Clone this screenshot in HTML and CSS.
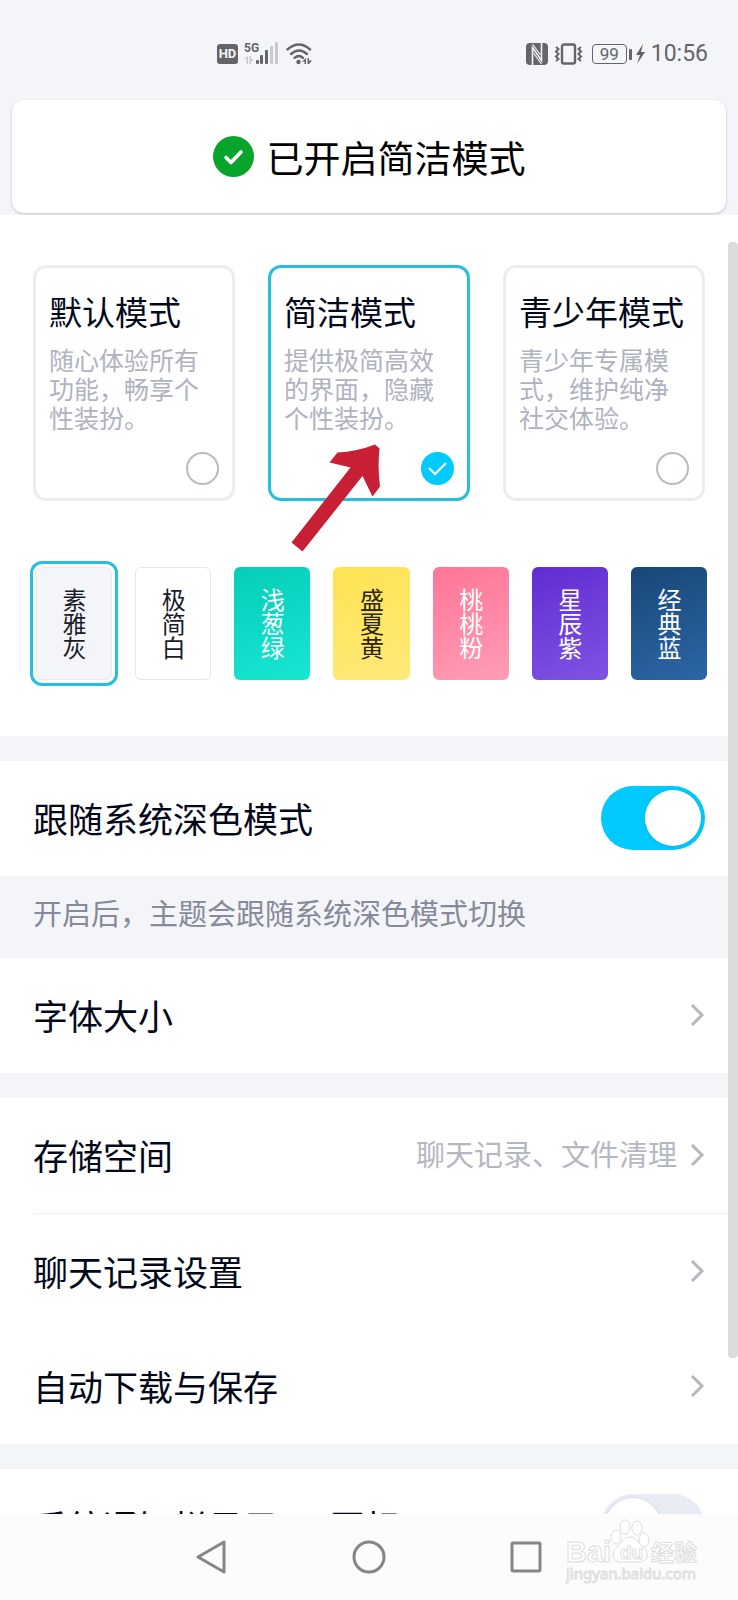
FILE: index.html
```html
<!DOCTYPE html>
<html lang="zh-CN">
<head>
<meta charset="utf-8">
<meta name="viewport" content="width=device-width, initial-scale=1">
<title>简洁模式</title>
<link rel="stylesheet" href="styles.css">
</head>
<body>
<div class="app">
  <header class="top">
    <div class="status">
      <div class="status-left">
        <span class="hd">HD</span>
        <svg class="signal" width="36" height="24" viewBox="0 0 36 24" aria-hidden="true">
          <text x="0" y="10" class="net">5G</text>
          <g fill="#c9cacd">
            <path d="M0 17l4-3v8H2.500v-5zM5.500 14H7v3l3 0-3 3v2H5.500z"/>
            <rect x="26" y="4" width="3" height="18" rx="1"/>
            <rect x="31" y="0" width="3" height="22" rx="1"/>
          </g>
          <g fill="#646568">
            <rect x="12" y="18" width="3" height="4" rx="1"/>
            <rect x="16" y="13" width="3" height="9" rx="1"/>
            <rect x="21" y="8" width="3" height="14" rx="1"/>
          </g>
        </svg>
        <svg width="27" height="22" viewBox="0 0 27 22" aria-hidden="true">
          <g fill="none" stroke="#646568" stroke-width="2.400" stroke-linecap="round">
            <path d="M1.500 6.500Q13 -3.500 24 6.500"/>
            <path d="M5 11Q13 4 21 11"/>
            <path d="M8.500 14.800Q13 11 17 14.800"/>
          </g>
          <circle cx="12.500" cy="19" r="2.200" fill="#646568"/>
          <path d="M16 18.500l4-3.500v6h-1.500v-2.500zM21.500 15H23v2.500h3L23 21h-1.500z" fill="#646568"/>
        </svg>
      </div>
      <div class="status-right">
        <svg width="22" height="22" viewBox="0 0 22 22" aria-hidden="true">
          <rect width="22" height="22" rx="4" fill="#646568"/>
          <path d="M6.500 22V4.500l9 13V0" fill="none" stroke="#f4f5f9" stroke-width="1.600"/>
          <path d="M6.500 1l8 11M7.500 10l8 11" fill="none" stroke="#f4f5f9" stroke-width="1.200"/>
        </svg>
        <svg class="vibrate" width="29" height="22" viewBox="0 0 29 22" fill="none" stroke="#646568" aria-hidden="true">
          <rect x="8" y="1.500" width="13" height="19" rx="2" stroke-width="2.400"/>
          <path d="M2 4l2.500 2L2 8.500 4.500 11 2 13.500 4.500 16 2 18M27 4l-2.500 2L27 8.500 24.500 11l2.500 2.500L24.500 16l2.500 2" stroke-width="2"/>
        </svg>
        <span class="battery">99</span>
        <svg width="9" height="20" viewBox="0 0 9 20" aria-hidden="true"><path d="M7 0L0 11h4L1 20l8-12H5z" fill="#646568"/></svg>
        <time class="clock">10:56</time>
      </div>
    </div>
    <div class="toast" role="status">
      <svg width="41" height="41" viewBox="0 0 41 41" aria-hidden="true">
        <circle cx="20.500" cy="20.500" r="20.500" fill="#08a42c"/>
        <path d="M13 21.500l5 5L28 16" fill="none" stroke="#fff" stroke-width="3.600" stroke-linecap="round" stroke-linejoin="round"/>
      </svg>
      <span>已开启简洁模式</span>
    </div>
  </header>

  <main class="content">
    <section class="panel theme">
      <div class="modes">
        <label class="mode">
          <span class="mode-title">默认模式</span>
          <span class="mode-desc">随心体验所有功能，畅享个性装扮。</span>
          <span class="pick"><input type="radio" name="mode"></span>
        </label>
        <label class="mode mode-on">
          <span class="mode-title">简洁模式</span>
          <span class="mode-desc">提供极简高效的界面，隐藏个性装扮。</span>
          <span class="pick"><input type="radio" name="mode" checked>
            <svg width="33" height="33" viewBox="0 0 33 33" aria-hidden="true"><path d="M8 16l6 6 11-11" fill="none" stroke="#e8fbff" stroke-width="2.400"/></svg>
          </span>
          <svg class="pointer" width="90" height="109" viewBox="0 0 90 109" aria-hidden="true"><path d="M84 0.500L88.500 4.500Q86.500 24 89 42.500L81.500 52.500 71.500 32 11.500 107.500 0.500 98.500 59.500 23.500 38.500 18.500 46.500 8.500Q66 7.500 84 0.500z" fill="#c81f35"/></svg>
        </label>
        <label class="mode">
          <span class="mode-title">青少年模式</span>
          <span class="mode-desc">青少年专属模式，维护纯净社交体验。</span>
          <span class="pick"><input type="radio" name="mode"></span>
        </label>
      </div>
      <div class="swatches">
        <label class="swatch gray"><input type="radio" name="skin" checked>素雅灰</label>
        <label class="swatch white"><input type="radio" name="skin">极简白</label>
        <label class="swatch green"><input type="radio" name="skin">浅葱绿</label>
        <label class="swatch yellow"><input type="radio" name="skin">盛夏黄</label>
        <label class="swatch pink"><input type="radio" name="skin">桃桃粉</label>
        <label class="swatch purple"><input type="radio" name="skin">星辰紫</label>
        <label class="swatch blue"><input type="radio" name="skin">经典蓝</label>
      </div>
    </section>

    <section class="panel">
      <label class="row"><span>跟随系统深色模式</span><input class="switch" type="checkbox" role="switch" checked></label>
    </section>
    <p class="note">开启后，主题会跟随系统深色模式切换</p>
    <section class="panel">
      <a class="row" href="#font"><span>字体大小</span>
        <svg class="chevron" width="16" height="24" viewBox="0 0 16 24" aria-hidden="true"><path d="M3 2l10 10L3 22"/></svg></a>
    </section>
    <section class="panel">
      <a class="row" href="#storage"><span>存储空间</span><span class="value">聊天记录、文件清理</span>
        <svg class="chevron" width="16" height="24" viewBox="0 0 16 24" aria-hidden="true"><path d="M3 2l10 10L3 22"/></svg></a>
      <hr class="line">
      <a class="row" href="#history"><span>聊天记录设置</span>
        <svg class="chevron" width="16" height="24" viewBox="0 0 16 24" aria-hidden="true"><path d="M3 2l10 10L3 22"/></svg></a>
      <a class="row" href="#download"><span>自动下载与保存</span>
        <svg class="chevron" width="16" height="24" viewBox="0 0 16 24" aria-hidden="true"><path d="M3 2l10 10L3 22"/></svg></a>
    </section>
    <section class="panel">
      <label class="row"><span>系统通知栏显示QQ图标</span><input class="switch" type="checkbox" role="switch"></label>
    </section>
    <div class="scrollbar"></div>
  </main>

  <nav class="nav">
    <button type="button" aria-label="返回"><svg width="34" height="36" viewBox="0 0 34 36"><path d="M29 3v30L3 18z"/></svg></button>
    <button type="button" aria-label="主页"><svg width="34" height="36" viewBox="0 0 34 36"><circle cx="17" cy="18" r="15"/></svg></button>
    <button type="button" aria-label="最近任务"><svg width="34" height="36" viewBox="0 0 34 36"><rect x="3" y="4" width="28" height="28" rx="1"/></svg></button>
    <svg class="mark" width="136" height="66" viewBox="0 0 136 66" role="img" aria-label="Baidu 经验">
      <g fill="#fff" stroke="#dedede" stroke-width="1">
        <text x="1" y="43" class="mark-big">Bai</text>
        <ellipse cx="51" cy="18" rx="5" ry="7"/>
        <ellipse cx="60" cy="8" rx="5" ry="7"/>
        <ellipse cx="72" cy="9" rx="5" ry="7"/>
        <ellipse cx="79" cy="21" rx="5" ry="7"/>
        <path d="M65 18c7 0 9 7 14 11 6 5 3 14-4 14H55c-7 0-9-9-4-14 5-4 7-11 14-11z"/>
        <text x="55" y="40" class="mark-du">du</text>
        <text x="86" y="42" class="mark-cn">经验</text>
        <text x="1" y="60" class="mark-url">jingyan.baidu.com</text>
      </g>
    </svg>
  </nav>
</div>
</body>
</html>
```
FILE: styles.css
```css
* { box-sizing: border-box; }

body {
  margin: 0;
  background: #f4f5f9;
  color: #03081a;
  font-family: "Noto Sans CJK SC", "Noto Sans", sans-serif;
}

.app {
  display: flex;
  flex-direction: column;
  height: 100vh;
  overflow: hidden;
}

/* status bar and toast */
.top {
  flex: none;
  padding: 0 12px 2px;
}

.status {
  display: flex;
  justify-content: space-between;
  align-items: center;
  height: 100px;
  padding: 8px 18px 0 205px;
  color: #646568;
  font-family: Roboto, sans-serif;
}

.status-left,
.status-right {
  display: flex;
  align-items: center;
}

.status-left { gap: 6px; }
.status-right { gap: 4px; }

.hd {
  width: 21px;
  border-radius: 3px;
  background: #646568;
  color: #f4f5f9;
  font-size: 13px;
  font-weight: 700;
  line-height: 20px;
  text-align: center;
}

.net {
  fill: #646568;
  font-size: 12px;
  font-weight: 700;
}

.vibrate { margin-left: 2px; }

.battery {
  position: relative;
  width: 35px;
  margin: 0 5px 0 5px;
  border: 1px solid #646568;
  border-radius: 4px;
  font-size: 17px;
  line-height: 18px;
  text-align: center;
}

.battery::after {
  content: "";
  position: absolute;
  top: 4px;
  right: -6px;
  width: 3px;
  height: 11px;
  border-radius: 1px;
  background: #646568;
}

.clock {
  margin-left: 2px;
  font-size: 23px;
  line-height: 28px;
}

.toast {
  display: flex;
  justify-content: center;
  align-items: center;
  gap: 13px;
  height: 113px;
  border-radius: 12px;
  background: #fff;
  box-shadow: 0 1px 3px rgba(0, 0, 0, 0.22);
  color: #000;
  font-size: 37px;
  line-height: 48px;
}

/* settings list */
.content {
  position: relative;
  flex: 1;
  min-height: 0;
  overflow: hidden;
}

.panel { background: #fff; }
.panel + .panel { margin-top: 25px; }

.theme { padding: 50px 0 56px; }

.modes {
  display: grid;
  grid-template-columns: repeat(3, 1fr);
  gap: 33px;
  padding: 0 33px;
}

.mode {
  position: relative;
  display: flex;
  flex-direction: column;
  padding: 23px 13px 13px;
  border: 3px solid #ebedf2;
  border-radius: 13px;
}

.mode-on { border-color: #27bfdf; }

.mode-title {
  font-size: 33px;
  line-height: 40px;
  white-space: nowrap;
}

.mode-desc {
  margin: 14px 0 20px;
  color: #b0b3bf;
  font-size: 25px;
  line-height: 29px;
}

.pick {
  display: grid;
  align-self: flex-end;
}

.pick > * { grid-area: 1 / 1; }

.pick input {
  appearance: none;
  width: 33px;
  height: 33px;
  margin: 0;
  border: 2px solid #b9bbc3;
  border-radius: 50%;
}

.pick input:checked {
  border-color: #00caff;
  background: #00caff;
}

.pick svg { z-index: 1; }

.pointer {
  position: absolute;
  top: 176px;
  left: 20px;
  z-index: 1;
  pointer-events: none;
}

.swatches {
  display: grid;
  grid-template-columns: repeat(7, 1fr);
  gap: 23px;
  margin-top: 66px;
  padding: 0 31px 0 36px;
}

.swatch {
  display: flex;
  justify-content: center;
  align-items: center;
  height: 113px;
  border-radius: 6px;
  color: #fff;
  font-size: 24px;
  line-height: 28px;
  writing-mode: vertical-rl;
}

.swatch input {
  position: absolute;
  appearance: none;
  margin: 0;
}

.swatch:has(:checked) {
  outline: 3px solid #27bfdf;
  outline-offset: 3px;
}

.gray { border: 1px solid #e8e9ee; background: #f4f5f9; color: #1b1c2b; }
.white { border: 1px solid #e6e7ea; background: #fff; color: #1b1c2b; }
.green { background: linear-gradient(160deg, #06cdb9, #17e6d3); }
.yellow { background: linear-gradient(160deg, #ffe353, #ffe97a); color: #2b2608; }
.pink { background: linear-gradient(160deg, #ff7597, #ff9db5); }
.purple { background: linear-gradient(160deg, #602dd2, #8053e4); }
.blue { background: linear-gradient(160deg, #194778, #2c66a6); }

.row {
  display: flex;
  align-items: center;
  height: 115px;
  padding: 0 33px 2px;
  color: inherit;
  font-size: 35px;
  line-height: 48px;
  text-decoration: none;
}

.row > :first-child { flex: 1; }

.value {
  margin-right: 12px;
  padding-bottom: 4px;
  color: #b5b7c1;
  font-size: 29px;
}

.chevron {
  fill: none;
  stroke: #b5b7c1;
  stroke-width: 3;
}

.line {
  height: 1px;
  margin: 0 0 0 33px;
  border: 0;
  background: #eff0f3;
}

.note {
  margin: 0;
  padding: 16px 33px 26px;
  color: #878a9b;
  font-size: 29px;
  line-height: 40px;
}

.switch {
  appearance: none;
  width: 104px;
  height: 64px;
  margin: 0;
  padding: 4px;
  border-radius: 32px;
  background: #e9ebf5;
}

.switch::after {
  content: "";
  display: block;
  width: 56px;
  height: 56px;
  border-radius: 50%;
  background: #fff;
  box-shadow: 0 1px 4px rgba(60, 80, 140, 0.2);
}

.switch:checked { background: #00caff; }
.switch:checked::after { margin-left: auto; }

.scrollbar {
  position: absolute;
  top: 27px;
  right: 0;
  bottom: 156px;
  width: 10px;
  border-radius: 4px;
  background: #dcdcdc;
}

/* system navigation */
.nav {
  position: relative;
  display: flex;
  flex: none;
  justify-content: center;
  align-items: center;
  gap: 123px;
  height: 86px;
  background: #fcfcfc;
}

.nav button {
  display: flex;
  padding: 0;
  border: 0;
  background: none;
}

.nav button svg {
  fill: none;
  stroke: #868686;
  stroke-width: 3;
  stroke-linejoin: round;
}

.mark {
  position: absolute;
  right: 37px;
  bottom: 15px;
  font-family: "Liberation Sans", "Noto Sans CJK SC", sans-serif;
}

.mark-big { font-size: 29px; font-weight: 700; }
.mark-du { font-size: 19px; font-weight: 700; }
.mark-cn { font-family: "Noto Sans CJK SC", sans-serif; font-size: 23px; font-weight: 700; }
.mark-url { font-family: "Noto Sans", sans-serif; font-size: 15px; }
```
